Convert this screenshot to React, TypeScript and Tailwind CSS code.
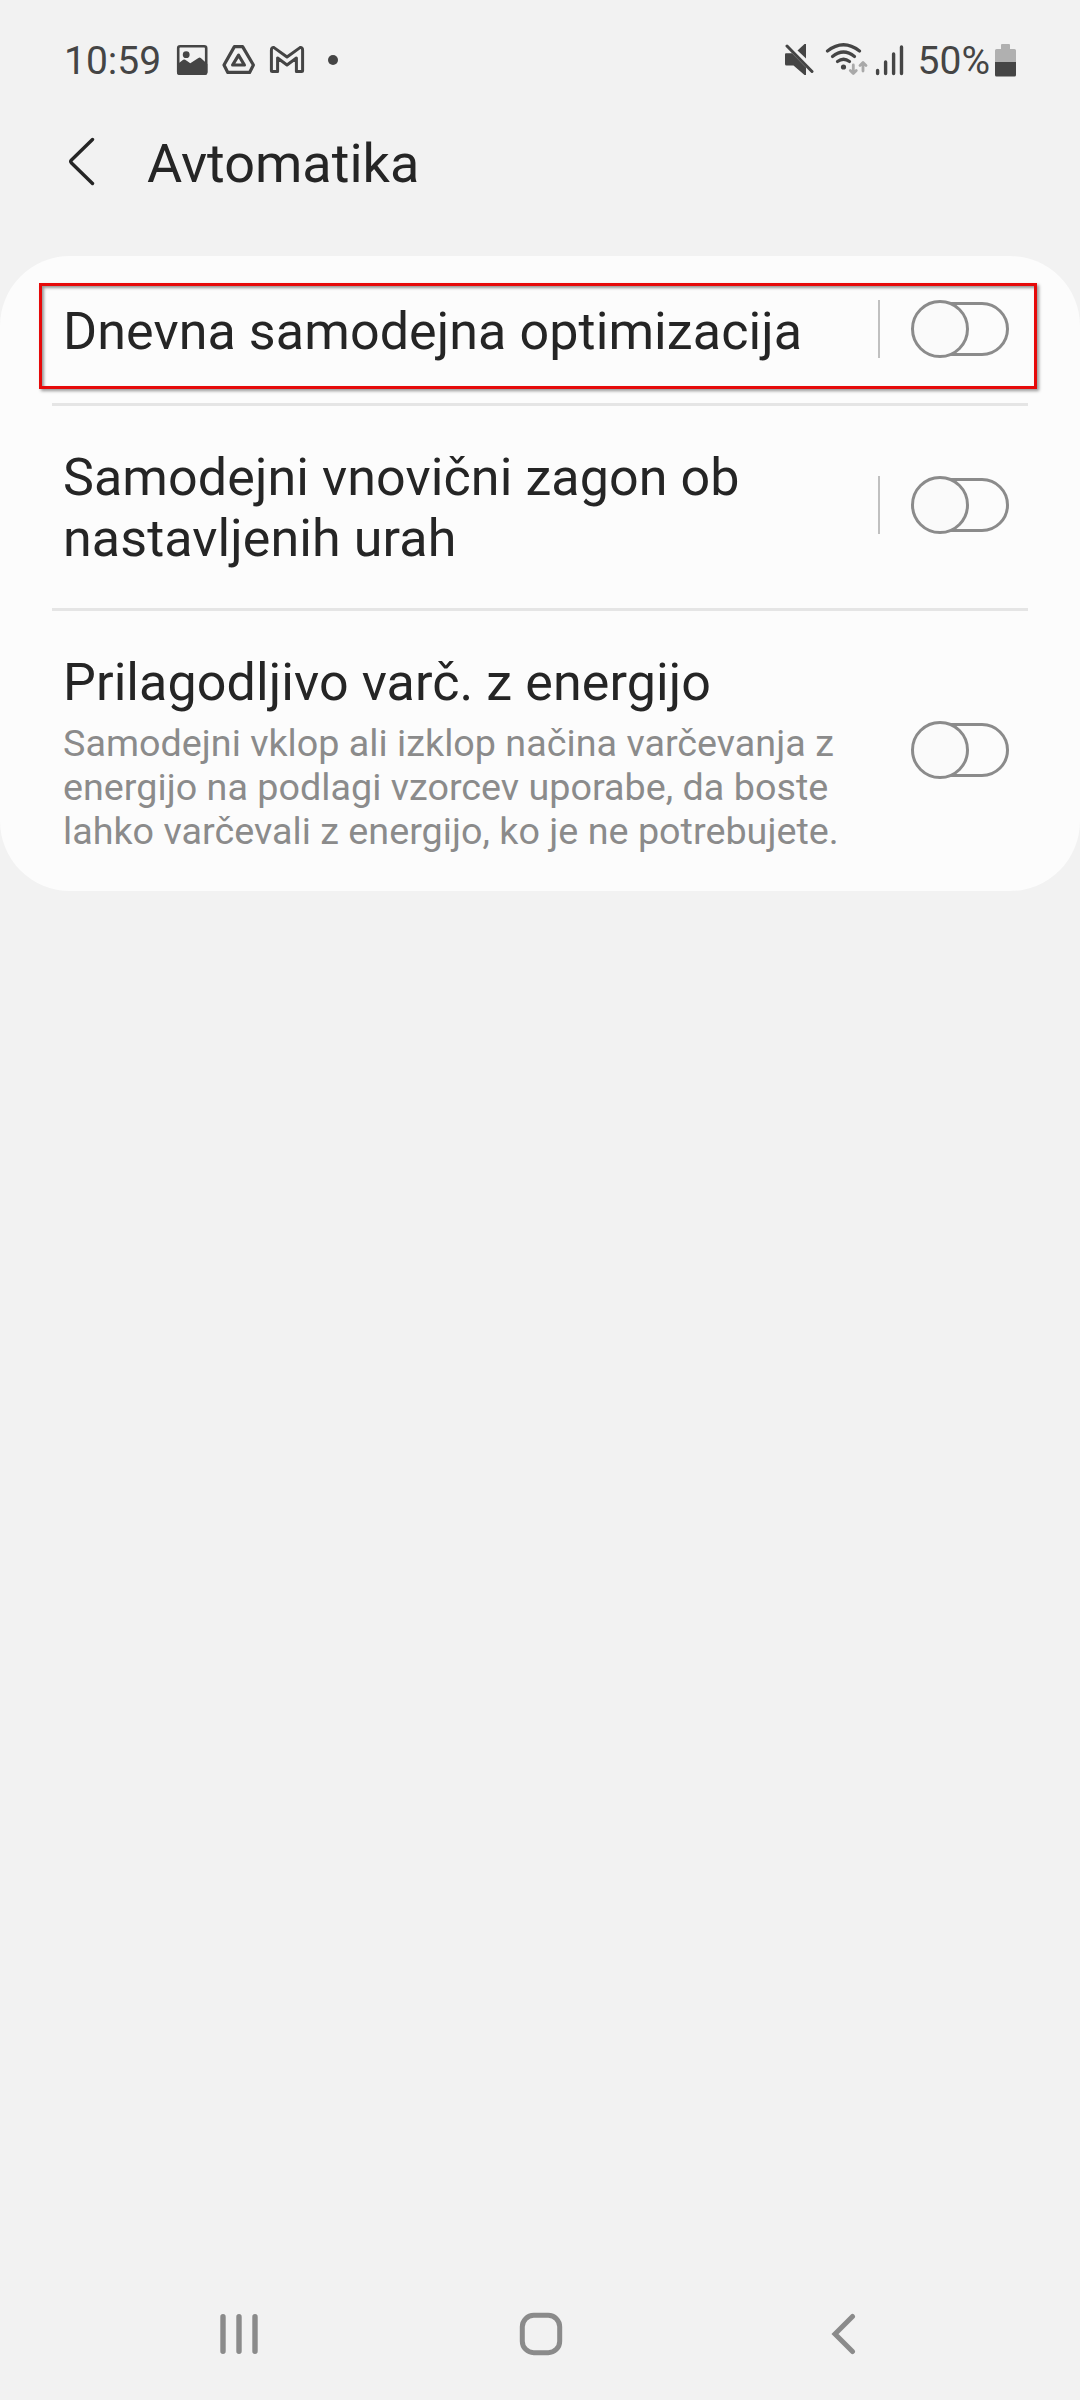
import React from "react";

function ImageIcon() {
  return (
    <svg width="32" height="32" viewBox="0 0 32 32" className="ml-[15px]">
      <rect x="2.2" y="2.2" width="28" height="27.5" rx="2" fill="none" stroke="#454545" strokeWidth="2.6" />
      <path d="M1 20.5 L7.2 15.8 Q8.2 15 9.2 15.8 L14.3 19.3 L22.4 14 Q23.6 13.200 24.800 14 L31.400 20 V28.500 Q31.400 31 29 31 H3.500 Q1 31 1 28.500 Z" fill="#454545" />
      <circle cx="10.200" cy="10.700" r="3.400" fill="#454545" />
    </svg>
  );
}

function DriveIcon() {
  return (
    <svg width="34" height="32" viewBox="0 0 34 32" className="ml-[14px]">
      <g fill="none" stroke="#454545" strokeWidth="3.2" strokeLinejoin="round">
        <path d="M12.400 2.600 H20.600 L31.400 21 L27.600 28.400 H5.800 L2 21 Z" />
        <path d="M16.600 11.200 L22.400 21 H10.600 Z" />
      </g>
    </svg>
  );
}

function GmailIcon() {
  return (
    <svg width="36" height="30" viewBox="0 0 36 30" className="ml-[13px]">
      <path
        d="M2.400 25.600 V5.200 Q2.400 2.200 5 2.600 L18 12 L31 2.600 Q33.600 2.200 33.600 5.200 V25.600 Q33.600 26.600 32.600 26.600 H27.400 V13 L18 20 L8.600 13 V26.600 H3.400 Q2.400 26.600 2.400 25.600 Z"
        fill="none"
        stroke="#454545"
        strokeWidth="3"
        strokeLinejoin="round"
      />
    </svg>
  );
}

function MuteIcon() {
  return (
    <svg width="30" height="34" viewBox="784 43 30 34">
      <path d="M786 53.200 H792 L806 67.500 V75 H804.500 L793.500 65.500 H786.500 Q785 65.500 785 64 V54.500 Q785 53.200 786 53.200 Z" fill="#454545" />
      <path d="M797.500 50.500 L804.500 44 H806 V58.500 Z" fill="#454545" />
      <path d="M787 46 L812 71.500" stroke="#454545" strokeWidth="3" strokeLinecap="round" />
    </svg>
  );
}

function WifiIcon() {
  return (
    <svg width="44" height="34" viewBox="825 43 44 34" className="ml-[11px]">
      <g fill="none" stroke="#454545" strokeWidth="3.2" strokeLinecap="round">
        <path d="M827.500 51 Q843.500 38.500 859.500 51" />
        <path d="M832.500 56.500 Q843.500 47.500 854.500 56.500" />
        <path d="M837.500 61.500 Q843.500 57 849.500 61.500" />
      </g>
      <circle cx="843.500" cy="67" r="2.600" fill="#454545" />
      <g fill="none" stroke="#a9a9a9" strokeWidth="2.800" strokeLinecap="round" strokeLinejoin="round">
        <path d="M853.300 65 V73 M850.300 70.500 L853.300 73.500 L856.300 70.500" />
        <path d="M863 71 V63 M860 65.500 L863 62.500 L866 65.500" />
      </g>
    </svg>
  );
}

function SignalIcon() {
  return (
    <svg width="29" height="34" viewBox="875 43 29 34" className="ml-[6px]">
      <path d="M877.600 70.500 V73.500 M885.600 62 V73.500 M893.600 54 V73.500 M901.500 47 V73.500" stroke="#454545" strokeWidth="3.400" strokeLinecap="round" />
    </svg>
  );
}

function BatteryIcon() {
  return (
    <svg width="21" height="33" viewBox="0 0 21 33" className="ml-[5px]">
      <path d="M6 5 V1 Q6 0 7 0 H14 Q15 0 15 1 V5 H19.500 Q21 5 21 6.500 V18 H0 V6.500 Q0 5 1.500 5 Z" fill="#b0b0b0" />
      <path d="M0 18 H21 V31 Q21 32.500 19.500 32.500 H1.500 Q0 32.500 0 31 Z" fill="#454545" />
    </svg>
  );
}

function Toggle() {
  return (
    <span role="switch" aria-checked="false" className="relative flex h-[58px] w-[98px] shrink-0 items-center">
      <span className="ml-[2px] h-[54px] w-[96px] rounded-full border-[3px] border-[#8b8b8b]" />
      <span className="absolute left-0 top-0 size-[58px] rounded-full border-[3px] border-[#8b8b8b] bg-[#fafafa]" />
    </span>
  );
}

function Separator() {
  return <div className="mx-[52px] h-[3px] bg-[#e5e5e5]" />;
}

const titleClass = "text-[52px] leading-[61px] tracking-[0.1px] text-[#252525] whitespace-nowrap";

export default function App() {
  return (
    <div className="flex h-[2400px] w-[1080px] flex-col overflow-hidden bg-[#f2f2f2] font-['Roboto',sans-serif]">
      <div className="flex h-[120px] items-center justify-between pl-[64px] pr-[64px] text-[39px] leading-[46px] text-[#454545]">
        <div className="flex items-center">
          <span className="mt-[2px]">10:59</span>
          <ImageIcon />
          <DriveIcon />
          <GmailIcon />
          <span className="ml-[23px] size-[10px] rounded-full bg-[#454545]" />
        </div>
        <div className="flex items-center">
          <MuteIcon />
          <WifiIcon />
          <SignalIcon />
          <span className="ml-[14px] mt-[2px]">50%</span>
          <BatteryIcon />
        </div>
      </div>

      <header className="flex h-[136px] items-start pl-[68px] pt-[12px]">
        <svg width="28" height="52" viewBox="0 0 28 52" className="mt-[4px]">
          <path d="M24.500 3.500 L3.500 24 Q2 25.500 3.500 27 L24.500 47.500" fill="none" stroke="#252525" strokeWidth="3.400" strokeLinecap="round" />
        </svg>
        <h1 className="ml-[51px] text-[54px] leading-[64px] text-[#252525]">Avtomatika</h1>
      </header>

      <main className="relative h-[635px] rounded-[70px] bg-[#fcfcfc]">
        <div className="flex h-[147px] items-center pb-px pl-[63px] pr-[71px]">
          <span className={titleClass + " mt-[4px] flex-1"}>Dnevna samodejna optimizacija</span>
          <span className="mr-[31px] h-[58px] w-[2px] bg-[#c0c0c0]" />
          <Toggle />
        </div>
        <Separator />
        <div className="flex h-[202px] items-center pb-[4px] pl-[63px] pr-[71px]">
          <span className={titleClass + " mt-[6px] flex-1"}>
            Samodejni vnovični zagon ob
            <br />
            nastavljenih urah
          </span>
          <span className="mr-[31px] h-[58px] w-[2px] bg-[#c0c0c0]" />
          <Toggle />
        </div>
        <Separator />
        <div className="flex h-[280px] items-center pb-[2px] pl-[63px] pr-[71px]">
          <div className="mt-[5px] flex-1">
            <div className={titleClass}>Prilagodljivo varč. z energijo</div>
            <p className="mt-[8px] whitespace-nowrap text-[37.7px] leading-[44px] tracking-[0.02px] text-[#8b8b8b]">
              Samodejni vklop ali izklop načina varčevanja z
              <br />
              energijo na podlagi vzorcev uporabe, da boste
              <br />
              lahko varčevali z energijo, ko je ne potrebujete.
            </p>
          </div>
          <Toggle />
        </div>
        <div className="pointer-events-none absolute left-[39px] top-[27px] h-[106px] w-[998px] border-[3px] border-[#e60a0a] shadow-[2px_2px_3px_rgba(0,0,0,0.4),inset_2px_2px_3px_rgba(0,0,0,0.4)]" />
      </main>

      <nav className="mt-auto flex h-[132px] items-center pl-[219px]">
        <svg width="40" height="44" viewBox="0 0 40 44">
          <path d="M4 4.700 V39.300 M20 4.700 V39.300 M36 4.700 V39.300" stroke="#8b8b8b" strokeWidth="5.400" strokeLinecap="round" />
        </svg>
        <svg width="44" height="44" viewBox="0 0 44 44" className="ml-[260px]">
          <rect x="3.300" y="3.300" width="37.400" height="37.400" rx="11.500" fill="none" stroke="#8b8b8b" strokeWidth="5" />
        </svg>
        <svg width="26" height="44" viewBox="0 0 26 44" className="ml-[267px]">
          <path d="M22.500 4.500 L5 22 L22.500 39.500" fill="none" stroke="#8b8b8b" strokeWidth="5" strokeLinecap="round" />
        </svg>
      </nav>
    </div>
  );
}
